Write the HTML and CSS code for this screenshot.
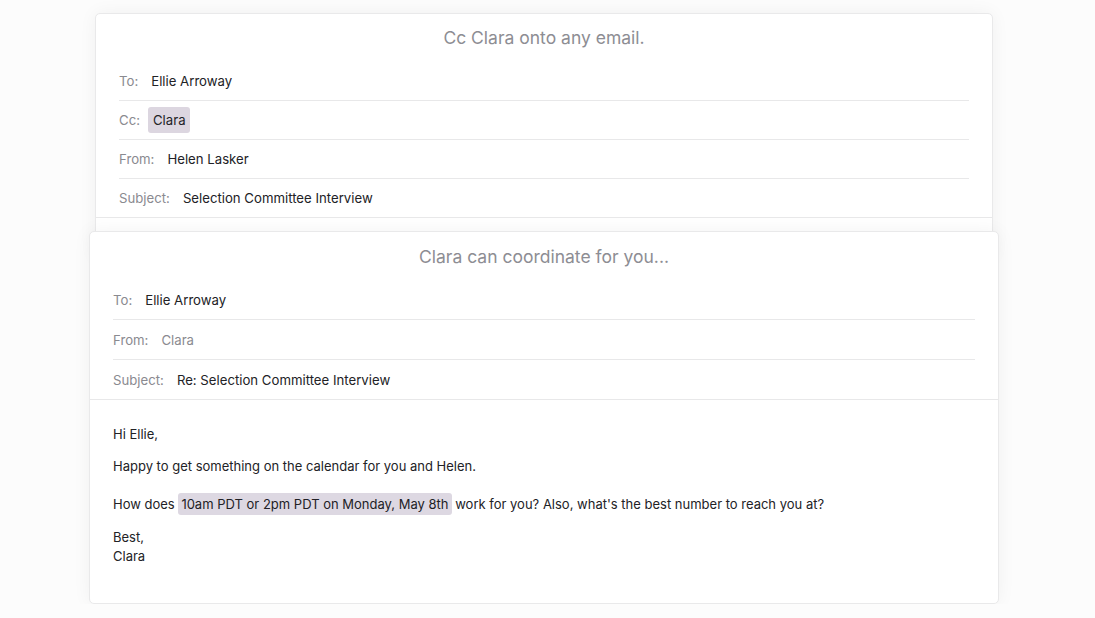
FILE: index.html
```html
<!DOCTYPE html>
<html lang="en">

<head>
    <meta charset="UTF-8">
    <meta name="viewport" content="width=device-width, initial-scale=1.0">
    <title>Clara</title>
    <link rel="stylesheet" href="styles.css">
</head>

<body>
    <div class="stack">
        <div class="mail mail-back">
            <div class="mail-title">Cc Clara onto any email.</div>
            <div class="fields">
                <div class="field">
                    <span class="label">To:</span>
                    <span class="value">Ellie Arroway</span>
                </div>
                <div class="field">
                    <span class="label">Cc:</span>
                    <span class="value chip">Clara</span>
                </div>
                <div class="field">
                    <span class="label">From:</span>
                    <span class="value">Helen Lasker</span>
                </div>
                <div class="field">
                    <span class="label">Subject:</span>
                    <span class="value">Selection Committee Interview</span>
                </div>
            </div>
            <div class="mail-body empty"></div>
        </div>

        <div class="mail mail-front">
            <div class="mail-title">Clara can coordinate for you...</div>
            <div class="fields">
                <div class="field">
                    <span class="label">To:</span>
                    <span class="value">Ellie Arroway</span>
                </div>
                <div class="field">
                    <span class="label">From:</span>
                    <span class="value muted">Clara</span>
                </div>
                <div class="field">
                    <span class="label">Subject:</span>
                    <span class="value">Re: Selection Committee Interview</span>
                </div>
            </div>
            <div class="mail-body">
                <p>Hi Ellie,</p>
                <p>Happy to get something on the calendar for you and Helen.</p>
                <p class="ask">How does <span class="mark">10am PDT or 2pm PDT on Monday, May 8th</span> work for you? Also, what's the best number to reach you at?</p>
                <p>Best,<br>Clara</p>
            </div>
        </div>
    </div>
</body>

</html>
```

FILE: styles.css
```css
* {
    box-sizing: border-box;
}

body {
    margin: 0;
    background: #fcfcfc;
    font-family: Inter, "Noto Sans", sans-serif;
    font-size: 13.2px;
    color: #222226;
    overflow: hidden;
}

.stack {
    width: 910px;
    margin-left: 89px;
    padding-top: 13px;
}

.mail {
    background: #fff;
    border: 1px solid #e9e9ea;
    border-radius: 5px;
    box-shadow: 0 0 18px rgba(0, 0, 0, 0.05);
}

.mail-back {
    margin: 0 6px;
}

.mail-front {
    position: relative;
    z-index: 2;
    margin-top: -28px;
}

.mail-title {
    text-align: center;
    font-size: 17.5px;
    line-height: 24px;
    color: #8d8d93;
    padding: 12px 0;
}

.mail-front .mail-title {
    padding-top: 13px;
    padding-bottom: 11px;
}

.fields {
    padding: 0 23px;
    border-bottom: 1px solid #e8e8e9;
}

.field {
    display: flex;
    align-items: center;
    height: 39px;
    border-bottom: 1px solid #e8e8e9;
}

.field:last-child {
    border-bottom: none;
    height: 38px;
}

.mail-front .field {
    height: 40px;
}

.mail-front .field:last-child {
    height: 39px;
}

.label {
    color: #8a8a90;
    margin-right: 13px;
}

.value.muted {
    color: #8a8a90;
}

.chip {
    background: #dcd6e0;
    border-radius: 3px;
    padding: 0 4px 0 5px;
    line-height: 26px;
    margin-left: -5px;
}

.mail-body {
    padding: 25px 23px 37px;
    font-size: 13px;
    line-height: 19px;
}

.mail-body.empty {
    height: 40px;
    padding: 0;
}

.mail-body p {
    margin: 0 0 13px;
}

.mail-body p:last-child {
    margin-bottom: 0;
}

.mail-body p.ask {
    margin: 19px 0 14px;
}

.mark {
    background: #ddd8e2;
    border-radius: 3px;
    padding: 3px 3px;
}
```
